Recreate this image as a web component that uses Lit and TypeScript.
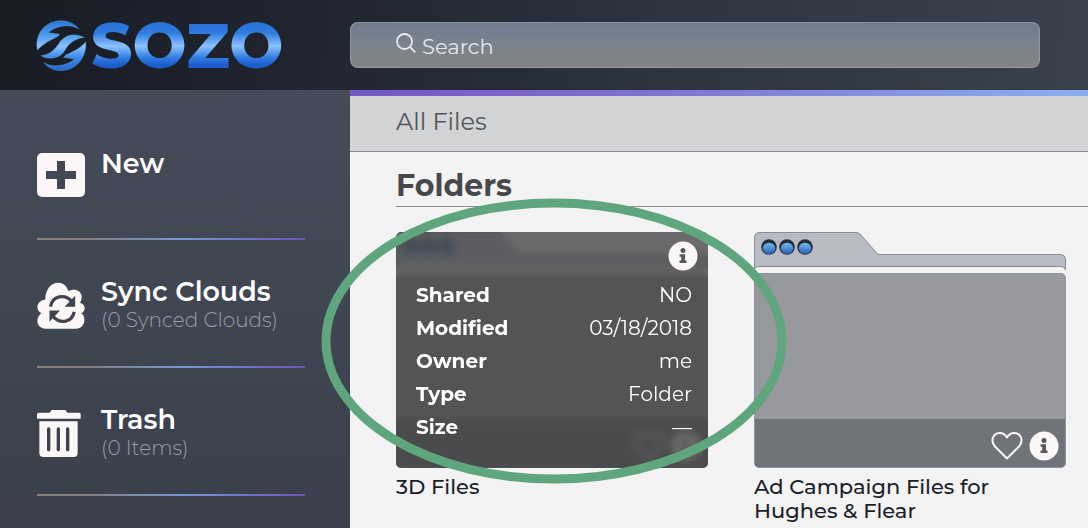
import { LitElement, html, svg, css, nothing } from "lit";
import { customElement, property } from "lit/decorators.js";

interface FileInfo {
  shared: string;
  modified: string;
  owner: string;
  type: string;
  size: string;
}

const infoGlyph = html`
  <svg class="info-icon" viewBox="0 0 30 30" aria-hidden="true">
    <circle cx="15" cy="15" r="14.5" fill="#faf7f6" />
    <circle cx="15" cy="9.6" r="2.5" fill="currentColor" />
    <path d="M11.6 13.2h5.4v6.2h1.5v2.6h-7v-2.6h1.7v-3.6h-1.6z" fill="currentColor" />
  </svg>
`;

const plusIcon = svg`
  <svg viewBox="0 0 48 48" width="48" height="48" aria-hidden="true">
    <rect x="0" y="0" width="48" height="44" rx="5" fill="#faf7f6" />
    <path d="M24 8v28M9 22h30" stroke="#414753" stroke-width="8" fill="none" />
  </svg>`;

const syncIcon = svg`
  <svg viewBox="50 64 146 146" width="48" height="48" aria-hidden="true">
    <path fill="#faf7f6" d="M76 209C58 209 48 194 52 179C54 171 59 166 63 161C46 156 45 124 75 120C76 90 91 69 115 69C132 69 141 80 146 95C158 86 181 90 185 106C188 116 184 124 181 130C199 135 199 157 184 162C193 167 196 178 193 190C189 205 177 209 166 209Z" />
    <g fill="none" stroke="#3e4450" stroke-width="10">
      <path d="M91 142C97 109 134 102 155 125" />
      <path d="M163 158C157 190 121 196 100 173" />
    </g>
    <path fill="#3e4450" d="M166 109V142H134Z M88 188V154H120Z" />
  </svg>`;

const trashIcon = svg`
  <svg viewBox="52 58 144 144" width="48" height="48" aria-hidden="true">
    <path fill="#faf7f6" d="M58 69H90L96 61H137L143 69H178Q183 69 183 74V87H52V74Q52 69 58 69Z" />
    <path fill="#faf7f6" d="M59 95H174V190Q174 202 162 202H71Q59 202 59 190Z" />
    <path d="M87 118V180M116 118V180M144 118V180" stroke="#3b414d" stroke-width="10" stroke-linecap="round" />
  </svg>`;

@customElement("sozo-logo")
class SozoLogo extends LitElement {
  static styles = css`
    :host { display: flex; align-items: center; gap: 4px; }
    .mark { width: 51px; height: 51px; flex: none; }
    .word {
      font: 800 64px/50px Montserrat, "DejaVu Sans", sans-serif;
      background: linear-gradient(#2a73d8 10%, #2f7be0 26%, #8cc2ff 52%, #2f7be0 76%, #1d5ccb 90%);
      background-clip: text;
      -webkit-background-clip: text;
      color: transparent;
    }
  `;
  render() {
    return html`
      <svg class="mark" viewBox="20 21 150 150" aria-hidden="true">
        <defs>
          <linearGradient id="shine" x1="0" y1="22" x2="0" y2="170" gradientUnits="userSpaceOnUse">
            <stop offset="0" stop-color="#2a73d8" />
            <stop offset=".3" stop-color="#4b9bf0" />
            <stop offset=".52" stop-color="#8cc2ff" />
            <stop offset=".72" stop-color="#3f8ceb" />
            <stop offset="1" stop-color="#2566cf" />
          </linearGradient>
        </defs>
        <g fill="url(#shine)" stroke="#5aa5c8" stroke-width="1">
          <path d="M24 110C14 62 48 22 96 23C118 24 134 32 146 47C118 32 84 36 56 58L90 63C84 72 74 74 64 80C48 88 36 97 24 110Z" />
          <path d="M162 72C130 56 104 66 90 86C76 108 64 122 34 126C58 140 90 134 104 112C116 90 134 76 162 72Z" />
          <path d="M166 85C171 130 138 170 94 170C72 170 55 162 43 146C70 162 106 158 134 136L101 131C107 122 118 120 128 114C144 106 156 98 166 85Z" />
        </g>
      </svg>
      <span class="word">SOZO</span>
    `;
  }
}

@customElement("folder-card")
class FolderCard extends LitElement {
  @property() name = "";
  @property({ attribute: false }) info?: FileInfo;

  static styles = css`
    :host { display: block; }
    .folder { position: relative; display: flex; flex-direction: column; }
    .tab { display: block; width: 100%; height: 41px; }
    .front {
      box-sizing: border-box;
      height: 195px;
      border: 1px solid #8b95a3;
      border-radius: 5px;
      background: #98999c;
      display: flex;
      flex-direction: column;
      justify-content: flex-end;
      overflow: hidden;
    }
    .actions {
      display: flex;
      justify-content: flex-end;
      align-items: center;
      gap: 6px;
      height: 48px;
      padding: 5px 6px 0 0;
      box-sizing: border-box;
      background: #707378;
    }
    button {
      display: block;
      padding: 0;
      border: 0;
      background: none;
      color: #55585c;
      cursor: pointer;
    }
    button svg { display: block; }
    .info-icon { width: 30px; height: 30px; }
    .details {
      position: absolute;
      inset: 0;
      box-sizing: border-box;
      padding: 9px 16px 0 20px;
      border-radius: 5px;
      background: rgba(61, 61, 63, 0.75);
      backdrop-filter: blur(4px);
      color: #fff;
    }
    .close { display: flex; justify-content: flex-end; margin-right: -6px; }
    dl { margin: 8px 0 0; }
    .row { display: flex; justify-content: space-between; height: 33px; line-height: 33px; }
    dt { font-size: 20px; font-weight: 700; }
    dd { margin: 0; font-size: 20px; }
    .highlight {
      position: absolute;
      left: -75px;
      top: -34px;
      width: 466px;
      height: 286px;
      pointer-events: none;
      z-index: 5;
    }
    .name { margin: 7px 0 0; color: #1c1f2a; font-size: 21px; font-weight: 500; line-height: 24px; }
  `;

  renderDetails(info: FileInfo) {
    const rows = [
      ["Shared", info.shared],
      ["Modified", info.modified],
      ["Owner", info.owner],
      ["Type", info.type],
      ["Size", info.size],
    ];
    return html`
      <div class="details">
        <div class="close"><button aria-label="Hide details">${infoGlyph}</button></div>
        <dl>
          ${rows.map(([k, v]) => html`<div class="row"><dt>${k}</dt><dd>${v}</dd></div>`)}
        </dl>
      </div>
      <svg class="highlight" viewBox="0 0 466 286" aria-hidden="true">
        <ellipse cx="233" cy="143" rx="228" ry="138" fill="none" stroke="#5fa67e" stroke-width="9" />
      </svg>
    `;
  }

  render() {
    return html`
      <div class="folder">
        <svg class="tab" viewBox="0 0 312 41" preserveAspectRatio="none" aria-hidden="true">
          <defs>
            <linearGradient id="bead" x1="0" y1="0" x2="0" y2="1">
              <stop offset="0" stop-color="#6cbcf0" />
              <stop offset="1" stop-color="#2a62b4" />
            </linearGradient>
          </defs>
          <path d="M.5 37V6Q.5 .5 6 .5H102Q104.500 .5 106 2L124 22.500H306Q311.500 22.500 311.500 28V38Q311 34.500 307 34.500H5Q1 34.500 .5 37Z" fill="#b8bbc4" stroke="#8c8d92" />
          ${[15, 33, 51].map(
            (x) => svg`
              <circle cx=${x} cy="15" r="7.800" fill="#272d36" />
              <ellipse cx=${x} cy="16.300" rx="6.200" ry="5.600" fill="url(#bead)" />`
          )}
        </svg>
        <div class="front">
          <div class="actions">
            <button aria-label="Favourite">
              <svg width="32" height="30" viewBox="0 0 32 30" aria-hidden="true">
                <path d="M16 27.500L4 15.500C-1 9.500 2 2 9 2C12.500 2 14.500 4 16 6.500C17.500 4 19.500 2 23 2C30 2 33 9.500 28 15.500Z" fill="none" stroke="#faf7f6" stroke-width="2" stroke-linejoin="round" />
              </svg>
            </button>
            <button aria-label="Show details">${infoGlyph}</button>
          </div>
        </div>
        ${this.info ? this.renderDetails(this.info) : nothing}
      </div>
      <h3 class="name">${this.name}</h3>
    `;
  }
}

@customElement("app-root")
class AppRoot extends LitElement {
  static styles = css`
    :host {
      display: flex;
      flex-direction: column;
      min-height: 100vh;
      overflow: hidden;
      font-family: Montserrat, Inter, sans-serif;
    }
    header {
      display: grid;
      grid-template-columns: 350px 1fr;
      align-items: center;
      height: 90px;
      background: linear-gradient(95deg, #171b24, #20252f 30%, #2d333f 60%, #3a404c);
    }
    sozo-logo { padding-left: 36px; }
    .search {
      display: flex;
      align-items: center;
      gap: 6px;
      height: 46px;
      margin-right: 48px;
      padding-left: 46px;
      box-sizing: border-box;
      border-radius: 8px;
      background: linear-gradient(#6d7b8d, #7c838e 50%, #838384);
      box-shadow: inset 0 0 1px 1px rgba(170, 176, 184, 0.5);
    }
    .search svg { flex: none; margin-bottom: 4px; }
    .search input {
      flex: 1;
      min-width: 0;
      padding: 4px 0 0;
      border: 0;
      outline: 0;
      background: none;
      color: #e8eaee;
      font: 400 21px/28px Montserrat, Inter, sans-serif;
    }
    .search input::placeholder { color: #e4e6ea; opacity: 1; }
    .body { flex: 1; display: grid; grid-template-columns: 350px 1fr; }
    nav {
      padding: 22px 45px 0 37px;
      background: linear-gradient(#454b58, #3a3f4b);
    }
    .item {
      display: flex;
      gap: 16px;
      height: 126px;
      padding-top: 36px;
      box-sizing: border-box;
      color: #fff;
      text-decoration: none;
    }
    .item svg { display: block; flex: none; margin-top: 5px; }
    .title { font-size: 27px; font-weight: 600; line-height: 32px; }
    .note { color: #979dab; font-size: 20px; font-weight: 300; line-height: 25px; }
    .rule { height: 2px; background: linear-gradient(90deg, #8b8078, #83807f 20%, #7397d4 55%, #6e54b5); }
    main { background: #f3f3f3; }
    .crumb {
      height: 62px;
      box-sizing: border-box;
      padding-left: 46px;
      border-top: 6px solid;
      border-image: linear-gradient(90deg, #7458c4, #7c68cc 30%, #8aaff0) 1;
      border-width: 6px 0 0;
      background: #d3d4d6;
      box-shadow: inset 0 -1px #8b8c8f;
      color: #55565a;
      font-size: 24px;
      font-weight: 400;
      line-height: 51px;
    }
    section { padding: 16px 0 3px 46px; }
    h2 {
      margin: 0 0 25px;
      padding-bottom: 2px;
      border-bottom: 1px solid #8f8f91;
      color: #48484a;
      font-size: 30px;
      font-weight: 700;
      line-height: 36px;
    }
    .grid { display: grid; grid-template-columns: repeat(auto-fill, 312px); gap: 46px; }
  `;

  items = [
    { title: "New", note: "", icon: plusIcon },
    { title: "Sync Clouds", note: "(0 Synced Clouds)", icon: syncIcon },
    { title: "Trash", note: "(0 Items)", icon: trashIcon },
  ];

  details: FileInfo = { shared: "NO", modified: "03/18/2018", owner: "me", type: "Folder", size: "—" };

  render() {
    return html`
      <header>
        <sozo-logo></sozo-logo>
        <label class="search">
          <svg width="20" height="20" viewBox="0 0 20 20" fill="none" stroke="#e8eaee" stroke-width="1.800" aria-hidden="true">
            <circle cx="8.500" cy="8.500" r="7.500" />
            <path d="M13.800 13.800L19.400 19.400" />
          </svg>
          <input type="search" placeholder="Search" aria-label="Search" />
        </label>
      </header>
      <div class="body">
        <nav>
          ${this.items.map(
            (i) => html`
              <a class="item" href="#">
                ${i.icon}
                <div>
                  <div class="title">${i.title}</div>
                  ${i.note ? html`<div class="note">${i.note}</div>` : nothing}
                </div>
              </a>
              <div class="rule"></div>
            `
          )}
        </nav>
        <main>
          <div class="crumb">All Files</div>
          <section>
            <h2>Folders</h2>
            <div class="grid">
              <folder-card name="3D Files" .info=${this.details}></folder-card>
              <folder-card name="Ad Campaign Files for Hughes &amp; Flear"></folder-card>
            </div>
          </section>
        </main>
      </div>
    `;
  }
}
